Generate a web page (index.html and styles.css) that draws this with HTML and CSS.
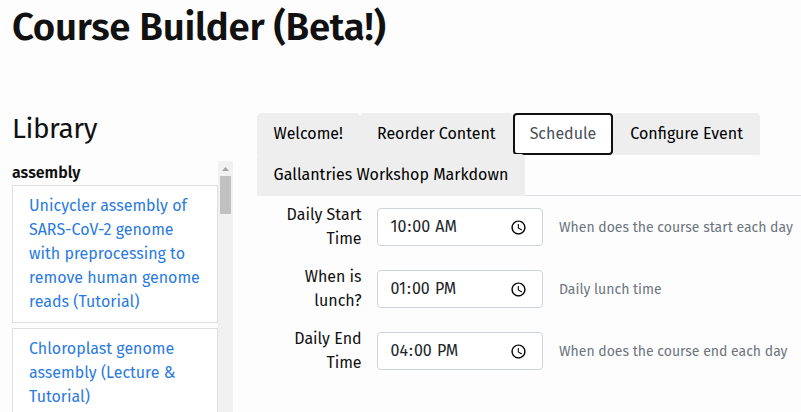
FILE: index.html
```
<!DOCTYPE html>
<html lang="en">
<head>
<meta charset="utf-8">
<title>Course Builder (Beta!)</title>
<link rel="stylesheet" href="styles.css">
</head>
<body>
<h1>Course Builder (Beta!)</h1>
<div class="row">
  <aside class="library">
    <h2>Library</h2>
    <div class="library-scroll">
      <div class="library-list">
        <b class="topic">assembly</b>
        <a class="card">Unicycler assembly of SARS-CoV-2 genome with preprocessing to remove human genome reads (Tutorial)</a>
        <a class="card">Chloroplast genome assembly (Lecture &amp; Tutorial)</a>
      </div>
      <div class="scrollbar">
        <svg width="15" height="15" viewBox="0 0 15 15"><path d="M4 10 7.5 6 11 10z" fill="#a3a3a3"/></svg>
        <div class="thumb"></div>
      </div>
    </div>
  </aside>
  <main>
    <nav class="tabs">
      <a class="tab">Welcome!</a>
      <a class="tab">Reorder Content</a>
      <a class="tab active">Schedule</a>
      <a class="tab">Configure Event</a>
      <a class="tab">Gallantries Workshop Markdown</a>
    </nav>
    <form>
      <div class="field">
        <label for="start">Daily Start Time</label>
        <input id="start" type="time" value="10:00">
        <small>When does the course start each day</small>
      </div>
      <div class="field">
        <label for="lunch">When is lunch?</label>
        <input id="lunch" type="time" value="13:00">
        <small>Daily lunch time</small>
      </div>
      <div class="field">
        <label for="end">Daily End Time</label>
        <input id="end" type="time" value="16:00">
        <small>When does the course end each day</small>
      </div>
    </form>
  </main>
</div>
</body>
</html>
```
FILE: styles.css
```
* { box-sizing: border-box; }
body {
  margin: 0;
  height: 412px;
  overflow: hidden;
  background: #fdfdfd;
  color: #111;
  font: 16px/24px "Fira Sans", "Noto Sans", sans-serif;
}
h1 {
  margin: 0;
  padding: 3px 12px 0;
  height: 113px;
  font-size: 38.4px;
  line-height: 48px;
  font-weight: 600;
  letter-spacing: -0.28px;
}
.row { display: flex; height: 299px; }
.library { width: 256.6px; flex: none; padding-left: 12px; }
h2 {
  margin: 0;
  height: 48px;
  font-size: 28px;
  line-height: 32px;
  font-weight: 400;
  letter-spacing: -0.45px;
}
.library-scroll { display: flex; width: 221px; height: 251px; overflow: hidden; }
.library-list { width: 206px; }
.topic { display: block; font-weight: 600; }
.card {
  display: block;
  margin-bottom: 5px;
  padding: 8px 16px;
  border: 1px solid #dfdfdf;
  background: #fff;
  color: #2a7ae2;
}
.scrollbar { width: 15px; background: #f1f1f1; }
.scrollbar svg { display: block; }
.thumb { width: 11px; height: 38px; margin: 0 2px; background: #c1c1c1; }
main { width: 544.4px; }
.tabs { display: flex; flex-wrap: wrap; height: 83px; border-bottom: 1px solid #dee2e6; }
.tab {
  height: 42px;
  margin-bottom: -1px;
  padding: 8px 16px;
  border: 1px solid #eee;
  border-radius: 4px 4px 0 0;
  background: #eee;
  color: #000;
}
.tab.active {
  border-color: #fff;
  background: #fff;
  color: #495057;
  outline: 2px solid #101010;
  outline-offset: -2px;
  border-radius: 4px;
}
form { padding-top: 7px; }
.field { display: flex; height: 48px; margin-bottom: 14px; }
label { width: 120px; padding: 0 15px 0 20px; text-align: right; }
input {
  width: 166px;
  height: 38px;
  margin: 5px 0 0;
  padding: 6px 12px;
  border: 1px solid #ced4da;
  border-radius: 4px;
  background: #fff;
  color: #212529;
  font: inherit;
}
input::-webkit-datetime-edit-ampm-field { margin-left: 1px; }
input::-webkit-calendar-picker-indicator {
  width: 17px;
  height: 17px;
  padding: 0;
  margin: 1px 3px 0 0;
  background-size: 17px 17px;
}
small { padding: 13px 0 0 16.4px; font-size: 14px; line-height: 24px; color: #6c757d; white-space: nowrap; }
```
